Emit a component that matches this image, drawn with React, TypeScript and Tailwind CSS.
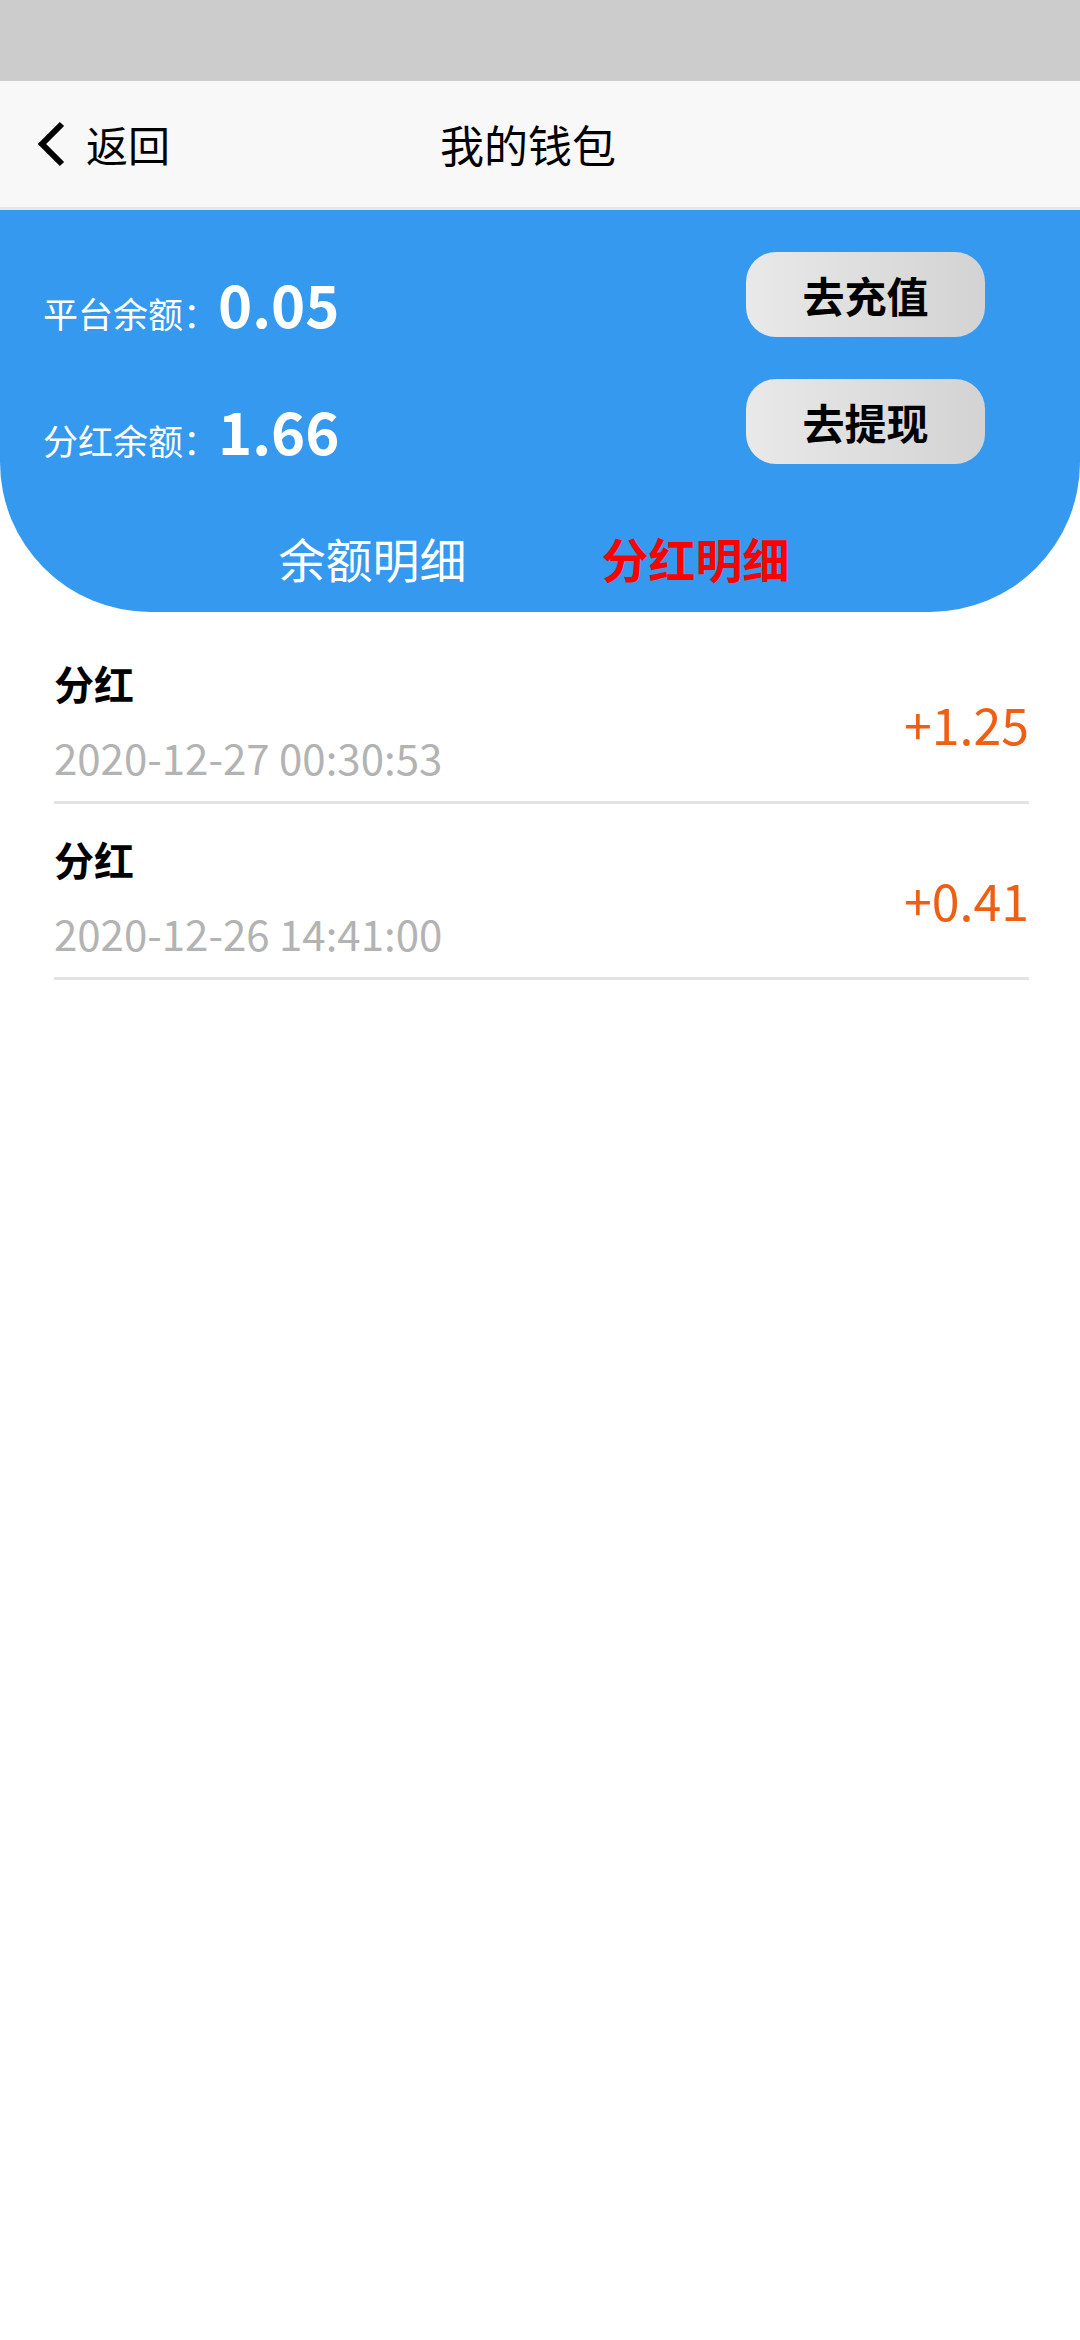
import React from "react";

const records = [
  { title: "分红", time: "2020-12-27 00:30:53", amount: "+1.25" },
  { title: "分红", time: "2020-12-26 14:41:00", amount: "+0.41" },
];

export default function App() {
  return (
    <div className="min-h-[2340px] w-[1080px] bg-white font-['Noto_Sans_CJK_SC',sans-serif]">
      <div className="h-[81px] bg-[#cccccc]" />
      <div className="grid h-[129px] grid-cols-[1fr_auto_1fr] items-center border-b-[3px] border-[#e6e6e6] bg-[#f8f8f8]">
        <div className="flex items-center pl-[36px]">
          <svg width="32" height="48" viewBox="0 0 32 48" className="block">
            <polyline points="26,4 6,24 26,44" fill="none" stroke="#000" strokeWidth="6" />
          </svg>
          <span className="ml-[18px] text-[42px] leading-none text-black">返回</span>
        </div>
        <div className="pr-[24px] text-[44px] leading-none text-black">我的钱包</div>
        <div />
      </div>
      <div className="rounded-b-[150px] bg-[#3699f0] pt-[42px] pb-[31px]">
        <div className="flex h-[85px] items-center justify-between pl-[43px] pr-[95px]">
          <div className="mt-[16px] flex items-baseline text-white">
            <span className="text-[35px] leading-none">平台余额：</span>
            <span className="text-[58px] font-bold leading-none">0.05</span>
          </div>
          <button className="h-[85px] w-[239px] rounded-[30px] bg-gradient-to-r from-[#e9e9e9] to-[#d3d3d3] text-[42px] font-bold leading-none text-black">
            去充值
          </button>
        </div>
        <div className="mt-[42px] flex h-[85px] items-center justify-between pl-[43px] pr-[95px]">
          <div className="mt-[16px] flex items-baseline text-white">
            <span className="text-[35px] leading-none">分红余额：</span>
            <span className="text-[58px] font-bold leading-none">1.66</span>
          </div>
          <button className="h-[85px] w-[239px] rounded-[30px] bg-gradient-to-r from-[#e9e9e9] to-[#d3d3d3] text-[42px] font-bold leading-none text-black">
            去提现
          </button>
        </div>
        <div className="mt-[70px] flex justify-center gap-[135px] pr-[12px]">
          <span className="text-[47px] leading-none text-white">余额明细</span>
          <span className="text-[47px] font-bold leading-none text-[#f00]">分红明细</span>
        </div>
      </div>
      <div className="pt-[16px] pl-[54px] pr-[51px]">
        {records.map((r, i) => (
          <div key={i} className="flex items-center justify-between border-b-[3px] border-[#e3e3e3] pt-[35px] pb-[19px]">
            <div className="flex flex-col">
              <span className="text-[40px] font-bold leading-[40px] text-black">{r.title}</span>
              <span className="mt-[29px] text-[42px] leading-[50px] text-[#b3b3b3]">{r.time}</span>
            </div>
            <span className="text-[50px] leading-none text-[#ee5f16]">{r.amount}</span>
          </div>
        ))}
      </div>
    </div>
  );
}
